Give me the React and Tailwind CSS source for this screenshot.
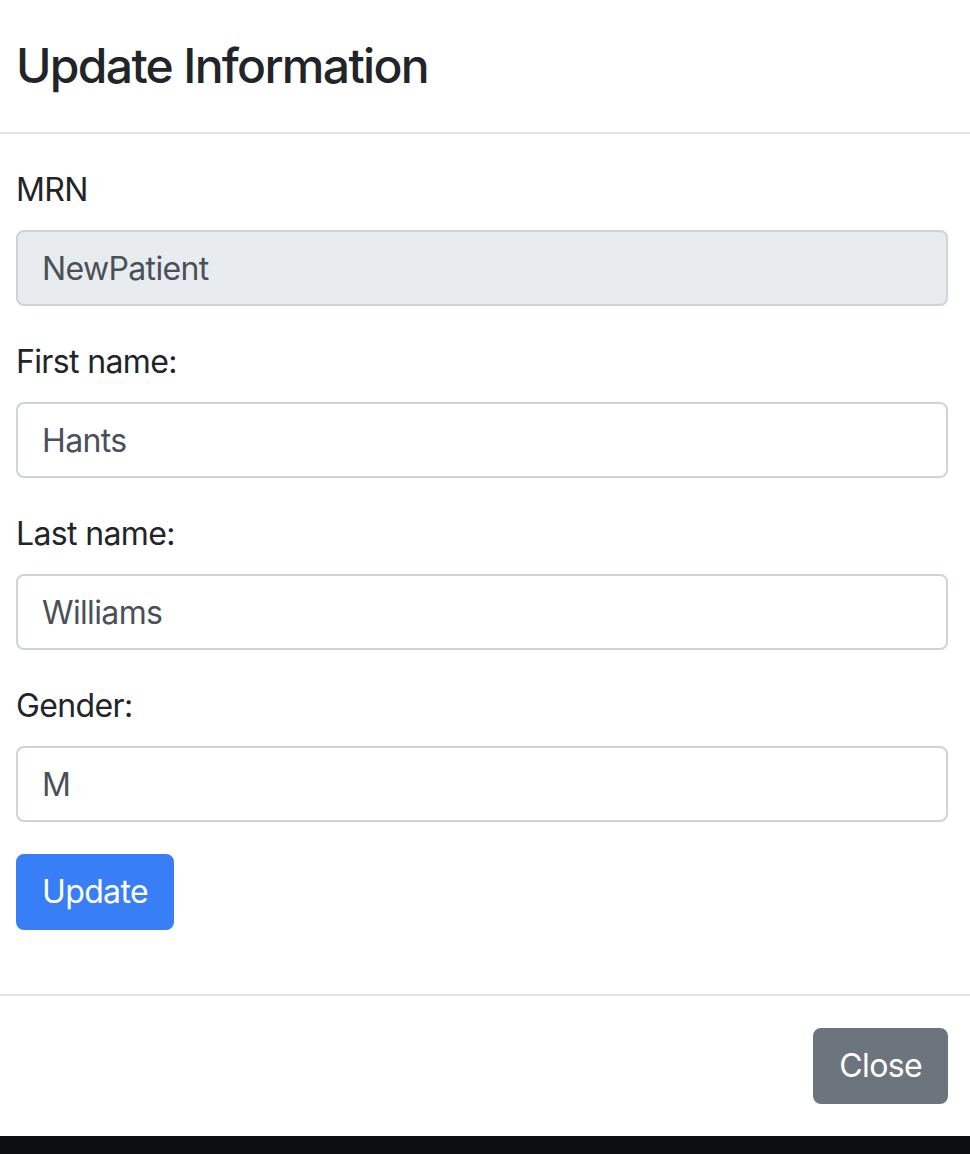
const fields = [
    { label: 'MRN', value: 'NewPatient', disabled: true },
    { label: 'First name:', value: 'Hants' },
    { label: 'Last name:', value: 'Williams' },
    { label: 'Gender:', value: 'M' }
];

const Field = ({ label, value, disabled }) => {
    return (
        <div className="mb-[32px]">
            <label className="block text-[32px] leading-[48px] tracking-[-0.02em] mb-[16px] text-[#212529]">
                {label}
            </label>
            <input
                type="text"
                defaultValue={value}
                disabled={disabled}
                className={`block w-full h-[76px] px-[24px] text-[32px] leading-[48px] tracking-[-0.02em] text-[#495057] border-2 border-[#ced4da] rounded-[8px] outline-none ${
                    disabled ? 'bg-[#e9ecef]' : 'bg-white'
                }`}
            />
        </div>
    );
};

export default function App() {
    return (
        <div className="w-[970px] h-[1154px] bg-white flex flex-col font-['Inter','Liberation_Sans',sans-serif]">
            <div className="pt-[30px] pb-[30px] pl-[16px] border-b-2 border-[#dee2e6]">
                <h4 className="text-[48px] leading-[72px] font-medium tracking-[-0.035em] text-[#212529]">Update Information</h4>
            </div>
            <div className="pt-[32px] pl-[16px] pr-[22px] pb-[32px]">
                <form onSubmit={(e) => e.preventDefault()}>
                    {fields.map((f) => (
                        <Field key={f.label} {...f} />
                    ))}
                    <button
                        type="submit"
                        className="h-[76px] px-[24px] text-[32px] leading-[48px] tracking-[-0.02em] text-white bg-[#377ef7] border-2 border-[#377ef7] rounded-[8px]"
                    >
                        Update
                    </button>
                </form>
            </div>
            <div className="mt-[32px] border-t-2 border-[#dee2e6] py-[32px] pr-[22px] flex justify-end">
                <button className="h-[76px] px-[24px] text-[32px] leading-[48px] tracking-[-0.02em] text-white bg-[#6c757d] border-2 border-[#6c757d] rounded-[8px]">
                    Close
                </button>
            </div>
            <div className="flex-1 bg-[#0d0e10]" />
        </div>
    );
}
